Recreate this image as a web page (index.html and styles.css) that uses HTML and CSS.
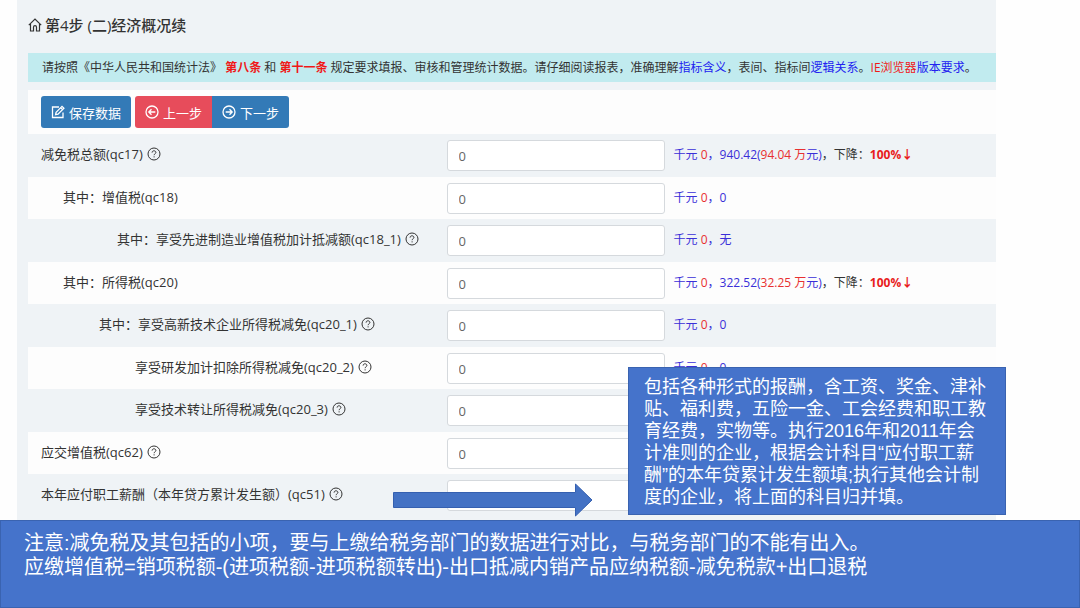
FILE: index.html
```html
<!DOCTYPE html>
<html lang="zh-CN">
<head>
    <meta charset="UTF-8">
    <title>第4步 (二)经济概况续</title>
    <link rel="stylesheet" href="styles.css">
</head>
<body>
    <svg class="sprite" aria-hidden="true">
        <symbol id="help" viewBox="0 0 14 14">
            <circle cx="7" cy="7" r="6"/>
            <path d="M5.1 5.6C5.1 4.4 5.9 3.8 7 3.8s1.9.7 1.9 1.7c0 1.2-1.8 1.3-1.8 2.7M7.1 9.3v1.1"/>
        </symbol>
    </svg>

    <form class="panel">
        <h1 class="title">
            <svg class="icon-home" viewBox="0 0 14 14"><path d="M.8 7.2 7 1l6.2 6.2M2.5 6v7h3V9.2c0-2 3-2 3 0V13h3V6"/></svg>
            第4步 (二)经济概况续
        </h1>

        <p class="notice">请按照《中华人民共和国统计法》 <b>第八条</b> 和 <b>第十一条</b> 规定要求填报、审核和管理统计数据。请仔细阅读报表，准确理解<a href="#">指标含义</a>，表间、指标间<a href="#">逻辑关系</a>。<a href="#" class="red">IE浏览器</a><a href="#">版本要求</a>。</p>

        <div class="toolbar">
            <button type="button" class="btn save"><svg viewBox="0 0 14 14"><path d="M8 2H1.5v10.5H12V7.5M4.6 9.6l.5-2.4L11 1.3l1.9 1.9L7 9.1zM9.6 2.7l1.9 1.9"/></svg>保存数据</button>
            <button type="button" class="btn prev"><svg viewBox="0 0 14 14"><circle cx="7" cy="7" r="6"/><path d="M10.3 7H4M6.5 4.3 3.8 7l2.7 2.7"/></svg>上一步</button>
            <button type="button" class="btn next"><svg viewBox="0 0 14 14"><circle cx="7" cy="7" r="6"/><path d="M3.7 7H10M7.5 4.3 10.2 7 7.5 9.7"/></svg>下一步</button>
        </div>

        <div class="rows">
            <div class="row">
                <label for="qc17">减免税总额(qc17) <svg class="help"><use href="#help"/></svg></label>
                <input id="qc17" type="text" value="0">
                <span class="hint">千元 <i>0</i>，940.42(<i>94.04 万</i>元)<em>，下降：</em><b>100%↓</b></span>
            </div>
            <div class="row">
                <label for="qc18" class="level1">其中：增值税(qc18)</label>
                <input id="qc18" type="text" value="0">
                <span class="hint">千元 <i>0</i>，0</span>
            </div>
            <div class="row">
                <label for="qc18_1" class="level3">其中：享受先进制造业增值税加计抵减额(qc18_1) <svg class="help"><use href="#help"/></svg></label>
                <input id="qc18_1" type="text" value="0">
                <span class="hint">千元 <i>0</i>，无</span>
            </div>
            <div class="row">
                <label for="qc20" class="level1">其中：所得税(qc20)</label>
                <input id="qc20" type="text" value="0">
                <span class="hint">千元 <i>0</i>，322.52(<i>32.25 万</i>元)<em>，下降：</em><b>100%↓</b></span>
            </div>
            <div class="row">
                <label for="qc20_1" class="level2">其中：享受高新技术企业所得税减免(qc20_1) <svg class="help"><use href="#help"/></svg></label>
                <input id="qc20_1" type="text" value="0">
                <span class="hint">千元 <i>0</i>，0</span>
            </div>
            <div class="row">
                <label for="qc20_2" class="level4">享受研发加计扣除所得税减免(qc20_2) <svg class="help"><use href="#help"/></svg></label>
                <input id="qc20_2" type="text" value="0">
                <span class="hint">千元 <i>0</i>，0</span>
            </div>
            <div class="row">
                <label for="qc20_3" class="level4">享受技术转让所得税减免(qc20_3) <svg class="help"><use href="#help"/></svg></label>
                <input id="qc20_3" type="text" value="0">
            </div>
            <div class="row">
                <label for="qc62">应交增值税(qc62) <svg class="help"><use href="#help"/></svg></label>
                <input id="qc62" type="text" value="0">
            </div>
            <div class="row">
                <label for="qc51">本年应付职工薪酬（本年贷方累计发生额）(qc51) <svg class="help"><use href="#help"/></svg></label>
                <input id="qc51" type="text" value="0">
            </div>
        </div>
    </form>

    <svg class="arrow" viewBox="0 0 200 34"><path d="M.5 9.5h182V1l16.5 16-16.5 16v-8.5H.5z"/></svg>

    <div class="callout">包括各种形式的报酬，含工资、奖金、津补<br>贴、福利费，五险一金、工会经费和职工教<br>育经费，实物等。执行2016年和2011年会<br>计准则的企业，根据会计科目“应付职工薪<br>酬”的本年贷累计发生额填;执行其他会计制<br>度的企业，将上面的科目归并填。</div>

    <div class="banner">注意:减免税及其包括的小项，要与上缴给税务部门的数据进行对比，与税务部门的不能有出入。<br>应缴增值税=销项税额-(进项税额-进项税额转出)-出口抵减内销产品应纳税额-减免税款+出口退税</div>
</body>
</html>
```
FILE: styles.css
```css
* {
    box-sizing: border-box;
}

body {
    margin: 0;
    min-height: 100vh;
    display: flex;
    flex-direction: column;
    position: relative;
    background: #fefefe;
    color: #333;
    font-family: "Open Sans", "Noto Sans CJK SC", sans-serif;
    font-size: 12px;
}

svg {
    fill: none;
    stroke: currentColor;
}

.sprite {
    position: absolute;
    width: 0;
    height: 0;
}

.panel {
    margin: 0 84px 0 17px;
    padding: 0 0 3px 11px;
    background: #eff3f6;
}

.title {
    display: flex;
    align-items: center;
    gap: 3px;
    height: 53px;
    margin: 0;
    padding-bottom: 4px;
    font-size: 15px;
    font-weight: 500;
}

.icon-home {
    width: 14px;
    height: 14px;
    stroke-width: 1.2;
}

.notice {
    margin: 0 0 8px;
    padding: 0 14px;
    background: #c1ebef;
    line-height: 29px;
    white-space: nowrap;
}

.notice a {
    color: #2222f0;
    text-decoration: none;
}

.notice b,
.notice a.red {
    color: #f01818;
}

.toolbar {
    display: flex;
    padding: 6px 13px;
    background: #fdfdfd;
}

.btn {
    display: flex;
    align-items: center;
    justify-content: center;
    gap: 4px;
    height: 32px;
    padding: 0 10px;
    border: none;
    border-radius: 3px;
    background: #337ab7;
    color: #fff;
    font: inherit;
    font-size: 13px;
}

.btn svg {
    width: 14px;
    height: 14px;
    stroke-width: 1.3;
}

.save {
    margin-right: 4px;
}

.prev {
    background: #e74c5b;
    border-radius: 3px 0 0 3px;
}

.next {
    border-radius: 0 3px 3px 0;
}

.row {
    display: grid;
    grid-template-columns: 42% 218px 1fr;
    align-items: center;
    padding: 6px 0;
}

.row:nth-child(even) {
    padding-bottom: 5px;
    background: #fdfdfd;
}

.row label {
    display: flex;
    align-items: center;
    gap: 4px;
    padding-left: 13px;
    padding-bottom: 4px;
    font-size: 13px;
    line-height: 20px;
    white-space: nowrap;
}

.row .level1 {
    padding-left: 35px;
}

.row .level2 {
    padding-left: 71px;
}

.row .level3 {
    padding-left: 89px;
}

.row .level4 {
    padding-left: 107px;
}

.help {
    width: 14px;
    height: 14px;
}

.row input {
    height: 31px;
    margin-left: 12px;
    margin-right: -12px;
    padding: 0 11px;
    border: 1px solid #d5d9dd;
    border-radius: 3px;
    background: #fff;
    color: #666;
    font: inherit;
    font-size: 13px;
}

.hint {
    padding-left: 21px;
    padding-bottom: 4px;
    color: #3a2fd8;
    white-space: nowrap;
}

.hint i {
    color: #e83030;
    font-style: normal;
}

.hint em {
    color: #333;
    font-style: normal;
}

.hint b {
    color: #e81c1c;
}

.arrow {
    position: absolute;
    left: 393px;
    top: 483px;
    width: 200px;
    height: 34px;
    fill: #4472c4;
    stroke: #3560b0;
}

.callout {
    position: absolute;
    left: 628px;
    top: 367px;
    padding: 8px 19px 6px 15px;
    border: 1px solid #3a63b0;
    background: #4573cb;
    color: #fff;
    font-family: "Liberation Sans", "Noto Sans CJK SC", sans-serif;
    font-size: 18px;
    line-height: 22px;
    white-space: nowrap;
}

.banner {
    flex: 1;
    padding: 10px 23px;
    border: 1px solid #3a63b0;
    background: #4573cb;
    color: #fff;
    font-family: "Liberation Sans", "Noto Sans CJK SC", sans-serif;
    font-size: 20px;
    line-height: 24px;
    white-space: nowrap;
}
```
